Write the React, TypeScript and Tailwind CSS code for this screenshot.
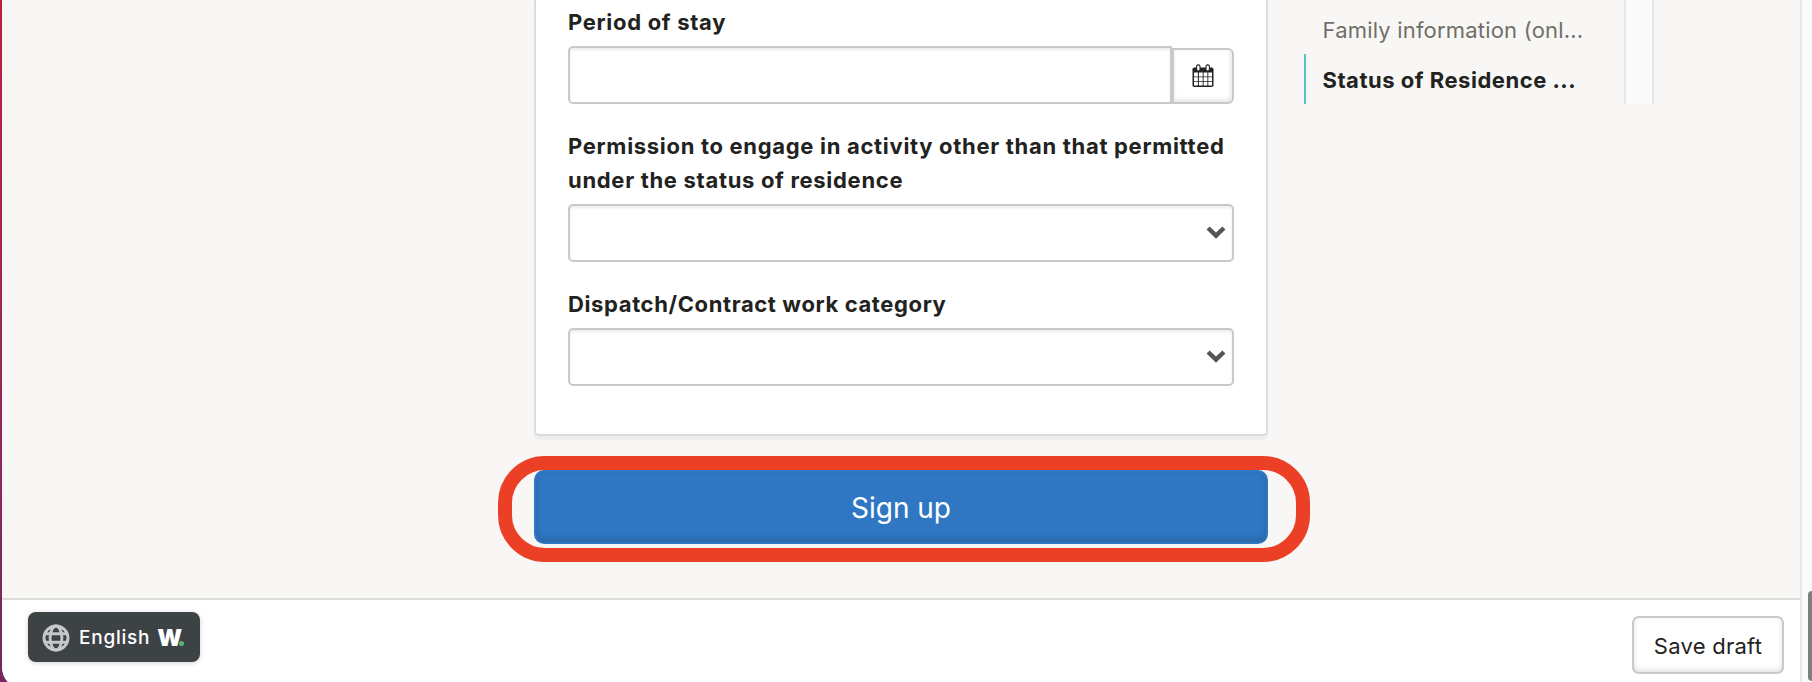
import React from "react";

const font = "font-['Inter','Liberation_Sans',sans-serif]";
const label = "text-[22px] leading-[34px] font-bold tracking-[0.69px] whitespace-nowrap";

function Select() {
  return (
    <div className="mt-[7px] flex h-[58px] items-center justify-end rounded-[5px] border-2 border-[#c9c9c9] bg-white pr-[6px] shadow-[inset_0_2px_3px_rgba(0,0,0,0.08)]">
      <svg width="20" height="14" viewBox="0 0 20 14" fill="none" stroke="#555" strokeWidth="4.4">
        <path d="M2.1 2 L10 9.7 L17.9 2" />
      </svg>
    </div>
  );
}

function Calendar() {
  return (
    <svg width="22" height="24" viewBox="0 0 22 24">
      <rect x="0.5" y="3.5" width="21" height="19.5" rx="1.8" fill="#222220" />
      <path
        fill="#fff"
        d="M2 8.6h3.9v3.8H2zM6.9 8.6h3.8v3.8H6.9zM11.6 8.6h3.8v3.8h-3.8zM16.3 8.6H20v3.8h-3.7zM2 13.3h3.9v3.6H2zM6.9 13.3h3.8v3.6H6.9zM11.6 13.3h3.8v3.6h-3.8zM16.3 13.3H20v3.6h-3.7zM2 17.8h3.9v3.7H2zM6.9 17.8h3.8v3.7H6.9zM11.6 17.8h3.8v3.7h-3.8zM16.3 17.8H20v3.7h-3.7z"
      />
      <rect x="4.6" y="0.9" width="3.4" height="6.2" rx="1.7" fill="#fff" stroke="#222220" strokeWidth="1.1" />
      <rect x="14" y="0.9" width="3.4" height="6.2" rx="1.7" fill="#fff" stroke="#222220" strokeWidth="1.1" />
    </svg>
  );
}

function Globe() {
  return (
    <svg width="28" height="28" viewBox="0 0 28 28" fill="none" stroke="#c5c7c8" strokeWidth="2.9">
      <circle cx="14" cy="14" r="12" />
      <ellipse cx="14" cy="14" rx="5.9" ry="12" />
      <path d="M2.8 9.8h22.4M2.8 18.2h22.4" />
    </svg>
  );
}

export default function App() {
  return (
    <div className={`flex h-[682px] w-[1812px] items-start overflow-hidden bg-linear-to-b from-[#c01d40] to-[#762663] text-[#222220] ${font}`}>
      <div className="ml-[2px] flex h-[689px] min-w-0 flex-1 overflow-hidden rounded-bl-[22px] bg-[#f8f7f6]">
        <div className="flex w-[1798px] flex-col">
          <main className="flex h-[598px] items-start pl-[532px]">
            <div className="w-[734px]">
              <section className="h-[436px] rounded-b-[5px] border-2 border-t-0 border-[#dcdcdb] bg-white px-8 pt-[5px] shadow-[0_4px_1px_rgba(0,0,0,0.04)]">
                <div className={label}>Period of stay</div>
                <div className="mt-[7px] flex h-[58px] items-end">
                  <div className="h-[58px] w-[604px] rounded-l-[5px] border-2 border-[#c9c9c9] shadow-[inset_0_2px_3px_rgba(0,0,0,0.08)]" />
                  <button className="flex h-14 w-[62px] items-center justify-center rounded-r-[6px] border-2 border-[#c9c9c9] bg-white pr-px shadow-[inset_-1px_-2px_5px_rgba(0,0,0,0.12)]">
                    <Calendar />
                  </button>
                </div>
                <div className={`mt-[25px] ${label}`}>
                  Permission to engage in activity other than that permitted
                  <br />
                  under the status of residence
                </div>
                <Select />
                <div className="mt-[25px] text-[22px] leading-[34px] font-bold tracking-[0.62px] whitespace-nowrap">Dispatch/Contract work category</div>
                <Select />
              </section>
              <div className="relative mt-[34px]">
                <button className="flex h-[74px] w-full items-center justify-center rounded-[10px] border-2 border-[#2f77c2] bg-[#2f77c2] pt-0.5 text-[28px] text-white shadow-[inset_0_-3px_6px_rgba(0,0,0,0.16)]">
                  Sign up
                </button>
                <div className="absolute -top-[14px] -left-[36.5px] h-[106px] w-[812.5px] rounded-[47px] border-[14px] border-[#ec4026]" />
              </div>
            </div>
            <nav className="ml-[36px] flex h-[104px] w-[320px] flex-col pt-[5px]">
              <div className="h-[49px] pl-[18.5px] text-[22px] leading-[50px] tracking-[0.19px] whitespace-nowrap text-[#706f66]">Family information (onl...</div>
              <div className="h-[50px] border-l-2 border-[#5bbfcb] pl-[16.5px] text-[22px] leading-[52px] font-bold tracking-[0.52px] whitespace-nowrap">Status of Residence ...</div>
            </nav>
            <div className="h-[104px] w-[30px] border-x-2 border-[#e7e7e7] bg-[#fafafa]" />
          </main>
          <footer className="flex h-[91px] items-start justify-between border-t-2 border-[#dcdcdb] bg-white pr-4 pl-[26px]">
            <div className="mt-3 flex h-[50px] w-[172px] items-center rounded-[8px] bg-[#3d4245] pt-0.5 pl-[14px] text-white shadow-[0_1px_5px_rgba(0,0,0,0.18)]">
              <Globe />
              <span className="ml-[9px] text-[19px] font-medium tracking-[0.75px]">English</span>
              <span className="ml-[7px] text-[23px] leading-none font-black">W</span>
              <span className="mt-[11px] -ml-[3px] h-[5px] w-[5px] rounded-full bg-[#55b578]" />
            </div>
            <button className="mt-4 h-[58px] w-[152px] rounded-[7px] border-2 border-[#c9c9c9] bg-white pt-0.5 text-[22px] tracking-[0.25px] shadow-[inset_0_-2px_5px_rgba(0,0,0,0.12)]">
              Save draft
            </button>
          </footer>
        </div>
        <div className="flex w-3 justify-end overflow-hidden border-l-2 border-[#e7e7e7] bg-[#fafafa]">
          <div className="mt-[591px] h-[90px] w-1 rounded-l-[6px] bg-[#7f7f7f]" />
        </div>
      </div>
    </div>
  );
}
